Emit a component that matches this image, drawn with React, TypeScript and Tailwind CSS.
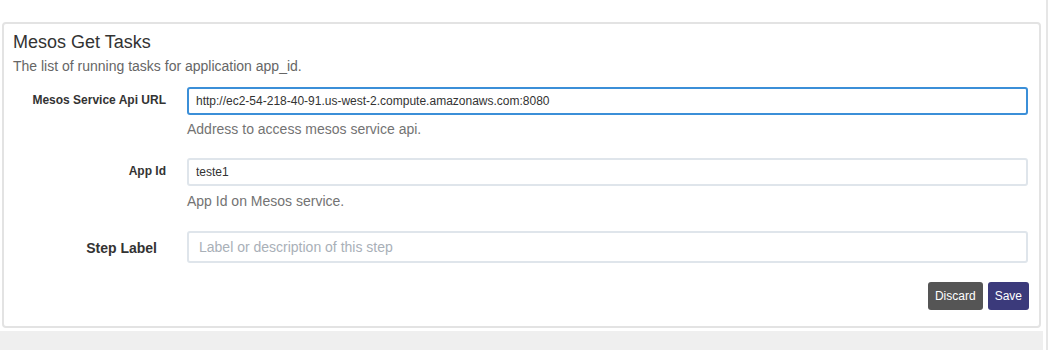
import { useState } from 'react';

type Field = {
  label: string;
  value: string;
  placeholder?: string;
  help?: string;
  focused?: boolean;
};

const fields: Field[] = [
  {
    label: 'Mesos Service Api URL',
    value: 'http://ec2-54-218-40-91.us-west-2.compute.amazonaws.com:8080',
    help: 'Address to access mesos service api.',
    focused: true,
  },
  {
    label: 'App Id',
    value: 'teste1',
    help: 'App Id on Mesos service.',
  },
];

const font = { fontFamily: '"Liberation Sans", Arial, sans-serif' };

const App = () => {
  const [values, setValues] = useState<string[]>(fields.map((f) => f.value));
  const [stepLabel, setStepLabel] = useState('');

  return (
    <div className="flex h-[350px] w-[1050px] bg-white" style={font}>
      <div className="flex w-[1043px] flex-col pt-[22px]">
        <div className="ml-[2px] h-[306px] w-[1039px] rounded-[4px] border-2 border-[#e3e3e3] pt-[8px] pl-[9px] pr-[11px] pb-[16px]">
          <h3 className="text-[18px] leading-[20px] text-[#333]">Mesos Get Tasks</h3>
          <p className="mt-[6px] text-[14px] leading-[16px] text-[#666]">
            The list of running tasks for application app_id.
          </p>

          {fields.map((field, i) => (
            <div key={field.label} className={i === 0 ? 'mt-[13px] flex' : 'mt-[21px] flex'}>
              <label className="w-[153px] shrink-0 pt-[5px] text-right text-[12px] font-bold leading-[16px] text-[#333]">
                {field.label}
              </label>
              <div className="ml-[21px] flex-1">
                <input
                  value={values[i]}
                  onChange={(e) => setValues(values.map((v, j) => (j === i ? e.target.value : v)))}
                  spellCheck={false}
                  className={`block h-[28px] w-full rounded-[3px] border-2 pl-[7px] text-[12px] text-[#333] outline-none ${
                    field.focused ? 'border-[#3b8fd8]' : 'border-[#dfe5eb]'
                  }`}
                  style={font}
                />
                <div
                  className={`${i === 0 ? 'mt-[6px]' : 'mt-[7px]'} text-[14px] leading-[16px] text-[#737373]`}
                >
                  {field.help}
                </div>
              </div>
            </div>
          ))}

          <div className="mt-[22px] flex">
            <label className="w-[153px] shrink-0 pt-[9px] pr-[9px] text-right text-[14px] font-bold leading-[16px] text-[#333]">
              Step Label
            </label>
            <input
              value={stepLabel}
              onChange={(e) => setStepLabel(e.target.value)}
              placeholder="Label or description of this step"
              className="ml-[21px] block h-[32px] flex-1 rounded-[3px] border-2 border-[#dfe5eb] pl-[10px] text-[14px] text-[#333] outline-none placeholder:text-[#a9b0b8]"
              style={font}
            />
          </div>

          <div className="mt-[19px] flex justify-end gap-[5px]">
            <button className="h-[28px] rounded-[3px] bg-[#555555] px-[7px] text-[12px] text-white">
              Discard
            </button>
            <button className="-mr-[1px] h-[28px] rounded-[3px] bg-[#3b3a7b] px-[7px] text-[12px] text-white">
              Save
            </button>
          </div>
        </div>
        <div className="mt-[3px] flex-1 bg-[#efefef]" />
      </div>
      <div className="ml-[3px] h-full w-[2px] bg-[#e6e6e6]" />
    </div>
  );
};

export default App;
